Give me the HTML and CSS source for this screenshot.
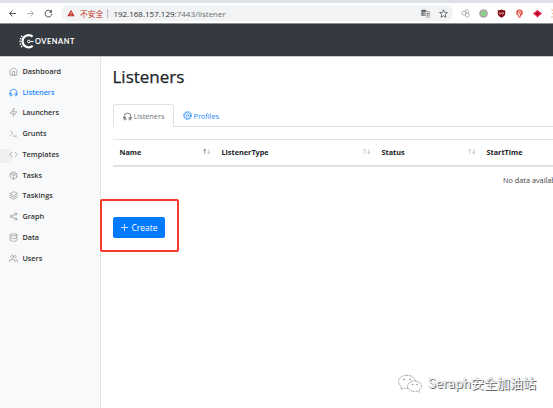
FILE: index.html
```html
<!DOCTYPE html>
<html lang="en">
<head>
<meta charset="utf-8">
<title>Covenant</title>
<link rel="stylesheet" href="styles.css">
</head>
<body>
<svg class="defs" width="0" height="0">
  <symbol id="headphones" viewBox="0 0 24 24"><path d="M3 18v-6a9 9 0 0 1 18 0v6"/><path d="M21 19a2 2 0 0 1-2 2h-1a2 2 0 0 1-2-2v-3a2 2 0 0 1 2-2h3zM3 19a2 2 0 0 0 2 2h1a2 2 0 0 0 2-2v-3a2 2 0 0 0-2-2H3z"/></symbol>
</svg>
<div class="tabstrip"></div>
<div class="toolbar">
  <svg class="nav-btn" viewBox="0 0 24 24"><path d="M21 12H4M12 4l-8 8 8 8"/></svg>
  <svg class="nav-btn dim" viewBox="0 0 24 24"><path d="M3 12h17M12 4l8 8-8 8"/></svg>
  <svg class="nav-btn" viewBox="0 0 24 24"><path d="M19 6.500A9 9 0 1 0 21 13"/><path d="M21 2v8h-8z" fill="#4a4d51" stroke="none"/></svg>
  <div class="address">
    <svg class="warn" viewBox="0 0 24 24"><path d="M12 2L23 22H1z" fill="#c5352b"/><path d="M12 9v6M12 17v3" stroke="#fff" stroke-width="2"/></svg>
    <span class="insecure">不安全</span><span class="sep"></span>
    <span class="url">192.168.157.129<span class="path">:7443/listener</span></span>
    <svg class="translate" viewBox="0 0 24 24"><path d="M1 2h12l4 16H1z" fill="#5f6368"/><path d="M11 7h12v15H13" fill="#eee" stroke="#777" stroke-width="1.500"/><path d="M11 10a3.500 3.500 0 1 0 0 3H8" fill="none" stroke="#fff" stroke-width="1.500"/><path d="M14 12h7M18 10v2M20 12q-1 4-5 6M16 14l4 5" fill="none" stroke="#555" stroke-width="1.500"/></svg>
    <svg class="star" viewBox="0 0 24 24"><path d="M12 2l3 7 7.500.6-5.700 5 1.700 7.400-6.500-4-6.500 4 1.700-7.400-5.700-5L9 9z"/></svg>
  </div>
  <div class="extensions">
    <svg viewBox="0 0 24 24" fill="none" stroke="#aaa" stroke-width="2.200"><circle cx="8" cy="11" r="5.500"/><circle cx="16" cy="7" r="4.500"/><circle cx="17" cy="16" r="5.500"/></svg>
    <svg viewBox="0 0 24 24"><circle cx="12" cy="12" r="11.500" fill="#a9a3a8"/><circle cx="12" cy="12" r="7" fill="#8bd58b"/></svg>
    <svg viewBox="0 0 24 24"><path d="M12 1q5 3 10 3v8q0 7-10 11Q2 19 2 12V4q5 0 10-3z" fill="#800610"/><path d="M6 9v3q0 2 2 2t2-2V9" fill="none" stroke="#fff" stroke-width="1.500"/><circle cx="15" cy="11.500" r="2.500" fill="none" stroke="#fff" stroke-width="1.500"/></svg>
    <svg viewBox="0 0 24 24"><path d="M12 1a9 9 0 0 1 9 9q0 5-5 8l-2 5h-4l-2-5q-5-3-5-8a9 9 0 0 1 9-9z" fill="#e45343"/><path d="M9 17V9q0-3 3-3t3 3-3 3v8" fill="none" stroke="#fff" stroke-width="2"/></svg>
    <svg viewBox="0 0 24 24"><path d="M12 1l3 4 4 3 5 4-5 4-4 3-3 4-3-4-4-3-5-4 5-4 4-3z" fill="#e31b45"/><path d="M12 7l5 5-5 5-5-5z" fill="#a00725"/></svg>
    <svg viewBox="0 0 24 24"><path d="M0 3h8M2 11l5 2M0 21h8" stroke="#e9a566" stroke-width="2"/></svg>
  </div>
</div>
<header class="navbar">
  <svg class="emblem" viewBox="0 0 18 18" fill="none" stroke="#fff"><path d="M15.500 3.800A6.500 6.500 0 1 0 15.500 13.700" stroke-width="2.400"/><path d="M4.500 3A9 9 0 0 0 5 15.500" stroke-width="1.500" stroke-dasharray="1.500 1.300"/><circle cx="11.500" cy="9" r="1.400"/><path d="M13 9h3.500"/></svg>
  <span class="brand">OVENANT</span>
</header>
<div class="layout">
  <aside class="sidebar">
    <a class="item"><svg viewBox="0 0 24 24"><path d="M3 9l9-7 9 7v11a2 2 0 0 1-2 2H5a2 2 0 0 1-2-2z"/><path d="M9 22V12h6v10"/></svg><span>Dashboard</span></a>
    <a class="item active"><svg><use href="#headphones"/></svg><span>Listeners</span></a>
    <a class="item"><svg viewBox="0 0 24 24"><path d="M13 2L3 14h9l-1 8 10-12h-9z"/></svg><span>Launchers</span></a>
    <a class="item"><svg viewBox="0 0 24 24"><path d="M4 17l6-6-6-6M12 19h8"/></svg><span>Grunts</span></a>
    <a class="item hinted"><svg viewBox="0 0 24 24"><path d="M16 18l6-6-6-6M8 6l-6 6 6 6"/></svg><span>Templates</span></a>
    <a class="item"><svg viewBox="0 0 24 24"><path d="M21 16V8a2 2 0 0 0-1-1.730l-7-4a2 2 0 0 0-2 0l-7 4A2 2 0 0 0 3 8v8a2 2 0 0 0 1 1.730l7 4a2 2 0 0 0 2 0l7-4A2 2 0 0 0 21 16zM3.300 7L12 12l8.700-5M12 22V12M7.500 4.200l9 5.200"/></svg><span>Tasks</span></a>
    <a class="item"><svg viewBox="0 0 24 24"><path d="M12 2L2 7l10 5 10-5zM2 17l10 5 10-5M2 12l10 5 10-5"/></svg><span>Taskings</span></a>
    <a class="item"><svg viewBox="0 0 24 24"><circle cx="18" cy="5" r="3"/><circle cx="6" cy="12" r="3"/><circle cx="18" cy="19" r="3"/><path d="M8.600 13.500l6.800 4M15.400 6.500l-6.800 4"/></svg><span>Graph</span></a>
    <a class="item"><svg viewBox="0 0 24 24"><ellipse cx="12" cy="5" rx="9" ry="3"/><path d="M21 12c0 1.660-4 3-9 3s-9-1.340-9-3M3 5v14c0 1.660 4 3 9 3s9-1.340 9-3V5"/></svg><span>Data</span></a>
    <a class="item"><svg viewBox="0 0 24 24"><path d="M17 21v-2a4 4 0 0 0-4-4H5a4 4 0 0 0-4 4v2M23 21v-2a4 4 0 0 0-3-3.870M16 3.130a4 4 0 0 1 0 7.750"/><circle cx="9" cy="7" r="4"/></svg><span>Users</span></a>
  </aside>
  <main class="content">
    <h1><span>Listeners</span></h1>
    <nav class="tabs">
      <a class="tab current"><svg><use href="#headphones"/></svg><span>Listeners</span></a>
      <a class="tab"><svg viewBox="0 0 24 24"><circle cx="12" cy="12" r="8.500"/><circle cx="12" cy="12" r="3"/><circle cx="12" cy="12" r="10.800" stroke-dasharray="3 5.480"/></svg><span>Profiles</span></a>
    </nav>
    <div class="table">
      <div class="row head">
        <div class="cell name"><span>Name</span><i><b>↑</b>↓</i></div>
        <div class="cell type"><span>ListenerType</span><i>↑↓</i></div>
        <div class="cell status"><span>Status</span><i>↑↓</i></div>
        <div class="cell start"><span>StartTime</span></div>
      </div>
      <div class="row empty"><span>No data available in table</span></div>
    </div>
    <button class="create"><svg viewBox="0 0 24 24"><path d="M12 4v16M4 12h16"/></svg><span>Create</span></button>
  </main>
</div>
<div class="highlight"></div>
<div class="watermark">
  <svg viewBox="0 0 24 18" fill="#fff" stroke="#999" stroke-width=".8" stroke-dasharray="2 .6"><path d="M9 .8c-5 0-8.500 3-8.500 6.500 0 2 1.200 3.800 3 5L3 15l3-1.500q2 .6 4 .3C17 13 17.500 9 17.500 6.500 17 3 13.500.8 9 .8z"/><path d="M16.500 6.500c-4 0-7 2.300-7 5.300s3 5.200 7 5.200l2.500-.4 2.500 1.200-.6-2c1.600-1 2.600-2.400 2.600-4 0-3-3-5.300-7-5.300z"/><g fill="#777" stroke="none"><circle cx="6" cy="5" r=".8"/><circle cx="12" cy="5" r=".8"/><circle cx="14.500" cy="10" r=".7"/><circle cx="19" cy="10" r=".7"/></g></svg>
  <span>Seraph安全加油站</span>
</div>
</body>
</html>
```
FILE: styles.css
```css
* { box-sizing: border-box; }
body { margin: 0; width: 553px; height: 408px; overflow: hidden; position: relative; background: #fff; color: #212529; font-family: "Open Sans", "Noto Sans CJK SC", sans-serif; font-size: 7.3px; }
.defs { position: absolute; }
svg { display: block; flex: none; }
span { white-space: nowrap; }
.tabstrip { height: 3px; background: #dee1e6; }
.toolbar { height: 21px; display: flex; align-items: center; border-bottom: 1px solid #8c9093; padding-left: 8px; }
.nav-btn { width: 9px; height: 9px; margin-right: 9px; fill: none; stroke: #4a4d51; stroke-width: 2.6; }
.nav-btn.dim { stroke: #b3b5b8; }
.address { flex: none; width: 392px; height: 16px; border-radius: 8px; background: #f1f3f4; display: flex; align-items: center; margin-left: -1px; padding-left: 6px; }
.warn { width: 8px; height: 8px; }
.insecure { margin-left: 5px; font-size: 7.8px; color: #c5352b; }
.sep { width: 1px; height: 9px; background: #b8babd; margin: 0 5px 0 4px; }
.url { font-size: 8px; color: #303236; width: 308px; flex: none; }
.path { color: #6a6d71; }
.translate { width: 9px; height: 9px; }
.star { width: 9px; height: 9px; margin-left: 9px; fill: none; stroke: #4a4d51; stroke-width: 2; }
.extensions { flex: none; display: flex; gap: 9px; margin-left: 8px; }
.extensions svg { width: 9px; height: 9px; }
.navbar { height: 32px; background: #343a40; display: flex; align-items: center; padding: 2px 0 0 18px; }
.emblem { width: 17px; height: 17px; }
.brand { color: #fff; font: 700 7.4px Lato, sans-serif; letter-spacing: .55px; }
.layout { display: flex; height: 352px; border-top: 1px solid #c8cacc; }
.sidebar { width: 101px; background: #f8f9fa; border-right: 1px solid #e3e5e8; padding-top: 4px; }
.item { height: 20.75px; display: flex; align-items: center; padding-left: 9px; font-weight: 600; color: #333; }
.item svg { width: 9px; height: 9px; margin-right: 4.4px; }
.item span { position: relative; top: -.6px; }
.item svg, .tab svg, .create svg { fill: none; stroke: #999; stroke-width: 2; stroke-linecap: round; stroke-linejoin: round; }
.item.active { color: #218aff; }
.item.active svg { stroke: #218aff; }
.hinted { background: linear-gradient(#eff0f1, #eff0f1) 0 5px / 12px 14px no-repeat; }
.content { flex: 1; min-width: 0; padding-left: 11.5px; overflow: hidden; }
h1 { margin: 7px 0 0; height: 25px; line-height: 25px; font-size: 17px; font-weight: 500; -webkit-text-stroke: .25px #212529; }
.tabs { display: flex; height: 23px; margin-top: 15px; border-bottom: 1px solid #dee2e6; }
.tab { display: flex; align-items: center; height: 23px; padding: 0 9px; color: #218aff; }
.tab svg { width: 9px; height: 9px; margin-right: 2px; stroke: #218aff; }
.tab.current { width: 61px; color: #6c757d; background: #fff; border: 1px solid #dee2e6; border-bottom: 0; border-radius: 3px 3px 0 0; }
.tab.current svg { stroke: #555; }
.table { width: 820px; margin-top: 12px; border-top: 1px solid #dee2e6; }
.row { display: flex; align-items: center; }
.head { height: 27px; padding-bottom: 1px; border-bottom: 2px solid #dee2e6; font-weight: 700; }
.cell { display: flex; justify-content: space-between; align-items: center; padding: 0 3px 0 7px; }
.name { width: 102px; }
.type { width: 160px; }
.status { width: 105px; }
.cell i { font: normal 7px "DejaVu Sans", sans-serif; color: #bbb; letter-spacing: -2px; padding-right: 2px; }
.cell b { color: #666; font-weight: 400; }
.empty { height: 25px; justify-content: center; color: #444; padding-left: 47px; }
.create { margin: 25px 0 0; width: 52px; height: 21px; display: flex; align-items: center; padding: 0 0 0 7px; border: 0; border-radius: 2px; background: #007bff; color: #fff; font-family: inherit; font-size: 8.5px; }
.create svg { width: 9px; height: 9px; margin-right: 3px; stroke: #fff; }
.highlight { position: absolute; left: 100px; top: 198.5px; width: 79px; height: 53px; border: 2px solid #f8392e; border-radius: 2px; }
.watermark { position: absolute; left: 398px; top: 373px; display: flex; align-items: center; gap: 6px; height: 20px; font: 13px "Noto Sans CJK SC", sans-serif; color: #fff; text-shadow: 1px 1px 0 #666, 0 0 1px #777; }
.watermark svg { width: 24px; height: 19px; }
.watermark span { position: relative; top: -1px; }
```
